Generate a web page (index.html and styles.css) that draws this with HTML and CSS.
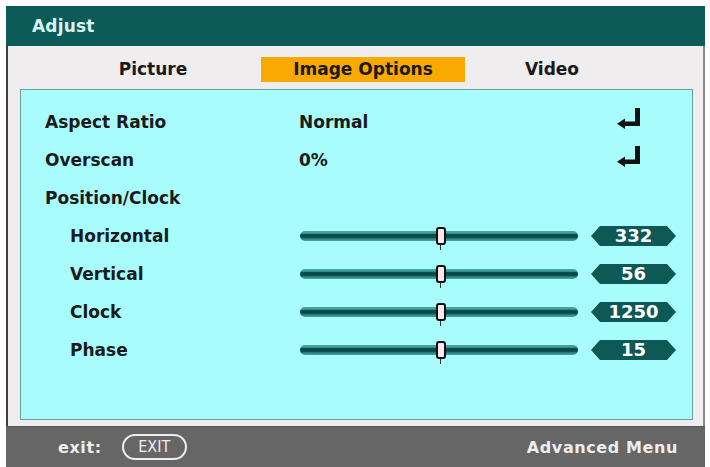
FILE: index.html
```html
<!DOCTYPE html>
<html lang="en">
<head>
    <meta charset="UTF-8">
    <title>Adjust - Image Options</title>
    <link rel="stylesheet" href="styles.css">
</head>
<body>

<div class="osd">
    <div class="osd-title">Adjust</div>

    <div class="osd-main">
        <div class="osd-tabs">
            <span class="osd-tab">Picture</span>
            <span class="osd-tab active">Image Options</span>
            <span class="osd-tab">Video</span>
        </div>

        <div class="osd-panel">
            <div class="osd-row">
                <span class="osd-label">Aspect Ratio</span>
                <span class="osd-value">Normal</span>
                <span class="osd-end">
                    <svg class="enter-icon" width="24" height="22" viewBox="0 0 24 22" aria-hidden="true">
                        <rect x="18" y="0" width="5" height="18" fill="#111"/>
                        <rect x="6" y="13.5" width="17" height="4.5" fill="#111"/>
                        <polygon points="0,15.7 8,10.5 8,21" fill="#111"/>
                    </svg>
                </span>
            </div>
            <div class="osd-row">
                <span class="osd-label">Overscan</span>
                <span class="osd-value">0%</span>
                <span class="osd-end">
                    <svg class="enter-icon" width="24" height="22" viewBox="0 0 24 22" aria-hidden="true">
                        <rect x="18" y="0" width="5" height="18" fill="#111"/>
                        <rect x="6" y="13.5" width="17" height="4.5" fill="#111"/>
                        <polygon points="0,15.7 8,10.5 8,21" fill="#111"/>
                    </svg>
                </span>
            </div>
            <div class="osd-row">
                <span class="osd-label">Position/Clock</span>
            </div>
            <div class="osd-row">
                <span class="osd-label sub">Horizontal</span>
                <span class="osd-value"><span class="track"><span class="thumb"></span></span></span>
                <span class="osd-end"><span class="badge">332</span></span>
            </div>
            <div class="osd-row">
                <span class="osd-label sub">Vertical</span>
                <span class="osd-value"><span class="track"><span class="thumb"></span></span></span>
                <span class="osd-end"><span class="badge">56</span></span>
            </div>
            <div class="osd-row">
                <span class="osd-label sub">Clock</span>
                <span class="osd-value"><span class="track"><span class="thumb"></span></span></span>
                <span class="osd-end"><span class="badge">1250</span></span>
            </div>
            <div class="osd-row">
                <span class="osd-label sub">Phase</span>
                <span class="osd-value"><span class="track"><span class="thumb"></span></span></span>
                <span class="osd-end"><span class="badge">15</span></span>
            </div>
        </div>
    </div>

    <div class="osd-footer">
        <span class="exit-label">exit:</span>
        <span class="exit-key">EXIT</span>
        <span class="footer-right">Advanced Menu</span>
    </div>
</div>

</body>
</html>
```

FILE: styles.css
```css
body {
    margin: 0;
    background-color: #fff;
    font-family: "DejaVu Sans", "Liberation Sans", sans-serif;
    font-weight: bold;
    font-size: 17px;
    color: #1a1a1a;
}
.osd {
    width: 699px;
    margin: 6px 0 0 6px;
}
.osd-title {
    height: 40px;
    line-height: 40px;
    padding-left: 26px;
    background-color: #0d5b59;
    color: #d6f3f0;
    letter-spacing: 0.2px;
}
.osd-main {
    background-color: #efeded;
    border-left: 2px solid #3e3e3e;
    border-right: 2px solid #8a8a8a;
    padding: 0 10px 6px 12px;
}
.osd-tabs {
    display: grid;
    grid-template-columns: 216px 204px 174px;
    padding: 11px 0 7px 25px;
}
.osd-tab {
    height: 25px;
    line-height: 25px;
    text-align: center;
}
.osd-tab.active {
    background-color: #f8aa00;
}
.osd-panel {
    height: 316px;
    background-color: #a9fcfc;
    border: 1px solid #6a9f9f;
    padding: 13px 0 0 24px;
}
.osd-row {
    display: grid;
    grid-template-columns: 254px 292px 85px;
    align-items: center;
    height: 38px;
}
.osd-label.sub {
    padding-left: 25px;
}
.osd-end {
    display: flex;
    align-items: center;
}
.enter-icon {
    margin-left: 26px;
    margin-top: -6px;
}

/* slider */
.track {
    position: relative;
    display: block;
    width: 278px;
    height: 10px;
    margin-left: 1px;
    border-radius: 5px;
    background: linear-gradient(to bottom, #45a6a4 0, #3d9f9d 22%, #0a4746 36%, #0a4746 62%, #2a8482 78%, #45a6a4 100%);
}
.thumb {
    position: absolute;
    left: 136px;
    top: -4px;
    width: 6px;
    height: 14px;
    background-color: #fde9eb;
    border: 2px solid #111;
    border-radius: 3px;
}
.thumb::after {
    content: '';
    position: absolute;
    left: 2px;
    top: 16px;
    width: 1px;
    height: 5px;
    background-color: #333;
}
.badge {
    display: block;
    width: 85px;
    height: 20px;
    line-height: 20px;
    text-align: center;
    color: #fff;
    font-size: 18px;
    background-color: #0e5856;
    clip-path: polygon(9px 0, calc(100% - 9px) 0, 100% 50%, calc(100% - 9px) 100%, 9px 100%, 0 50%);
}

/* footer */
.osd-footer {
    display: flex;
    align-items: center;
    height: 40px;
    padding: 0 27px 0 52px;
    background-color: #666;
    color: #eee;
    border-top: 1px solid #555;
    font-size: 16px;
}
.exit-label {
    letter-spacing: 0.6px;
}
.exit-key {
    margin-left: 20px;
    width: 61px;
    height: 22px;
    line-height: 22px;
    text-align: center;
    border: 2px solid #eee;
    border-radius: 13px;
    font-family: "DejaVu Sans Condensed", "DejaVu Sans", sans-serif;
    font-weight: normal;
    font-size: 16px;
}
.footer-right {
    margin-left: auto;
    letter-spacing: 0.6px;
}
```
